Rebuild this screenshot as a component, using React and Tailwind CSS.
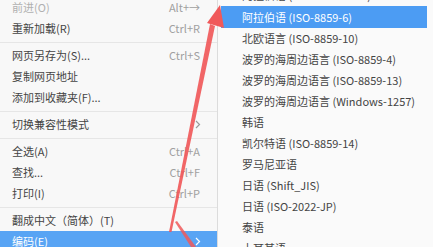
const MAIN = [
  { label: "前进(O)", key: "Alt+→", disabled: true },
  { label: "重新加载(R)", key: "Ctrl+R" },
  { sep: true },
  { label: "网页另存为(S)...", key: "Ctrl+S" },
  { label: "复制网页地址" },
  { label: "添加到收藏夹(F)..." },
  { sep: true },
  { label: "切换兼容性模式", sub: true },
  { sep: true },
  { label: "全选(A)", key: "Ctrl+A" },
  { label: "查找...", key: "Ctrl+F" },
  { label: "打印(I)", key: "Ctrl+P" },
  { sep: true },
  { label: "翻成中文（简体）(T)" },
  { label: "编码(E)", sub: true, active: true },
];

const ENCODINGS = [
  "阿拉伯语 (Windows-1256)",
  "阿拉伯语 (ISO-8859-6)",
  "北欧语言 (ISO-8859-10)",
  "波罗的海周边语言 (ISO-8859-4)",
  "波罗的海周边语言 (ISO-8859-13)",
  "波罗的海周边语言 (Windows-1257)",
  "韩语",
  "凯尔特语 (ISO-8859-14)",
  "罗马尼亚语",
  "日语 (Shift_JIS)",
  "日语 (ISO-2022-JP)",
  "泰语",
  "土耳其语",
];

const Chevron = ({ white }) => (
  <svg width="6" height="9" viewBox="0 0 6 9" fill="none">
    <path d="M1 1l3.5 3.5L1 8" stroke={white ? "#ffffff" : "#9a9a9a"} strokeWidth="1.2" />
  </svg>
);

function MainMenu() {
  return (
    <div className="w-[218px] shrink-0 h-full bg-[#f8f8f8] border-r border-[#dcdcdc] overflow-hidden">
      <div className="-mt-[3px]">
        {MAIN.map((item, i) =>
          item.sep ? (
            <div key={i} className="h-[6px] flex items-center">
              <div className="h-px w-full bg-[#e6e6e6]" />
            </div>
          ) : (
            <div
              key={i}
              className={`h-[21px] flex items-center justify-between pl-[12px] pr-[17px] ${
                item.active ? "bg-[#58a4f4] text-white" : item.disabled ? "text-[#b0b0b0]" : "text-[#444444]"
              }`}
            >
              <span>{item.label}</span>
              {item.key && <span className="text-[#a0a0a0]">{item.key}</span>}
              {item.sub && (
                <span className="mr-[-1px]">
                  <Chevron white={item.active} />
                </span>
              )}
            </div>
          )
        )}
      </div>
    </div>
  );
}

function SubMenu() {
  return (
    <div className="flex-1 h-full bg-[#fafafa] overflow-hidden pl-[3px] pr-[6px]">
      <div className="-mt-[15px]">
        {ENCODINGS.map((name, i) => (
          <div
            key={name}
            className={`flex items-center pl-[21px] ${
              i === 1 ? "h-[22px] bg-[#4c9cf3] text-white" : "h-[21px] text-[#444444]"
            }`}
          >
            {name}
          </div>
        ))}
      </div>
    </div>
  );
}

export default function App() {
  return (
    <div
      className="relative w-[433px] h-[247px] overflow-hidden flex bg-white text-[11px] leading-none"
      style={{ fontFamily: '"Noto Sans CJK SC", "Noto Sans", sans-serif' }}
    >
      <MainMenu />
      <SubMenu />
      <svg className="absolute inset-0 pointer-events-none" width="433" height="247" viewBox="0 0 433 247">
        <polygon points="169,232 171.5,232 215,26 210,24" fill="#f0595a" fillOpacity="0.92" />
        <polygon points="220,5 207,23 224,28" fill="#f0595a" />
        <polygon points="175,222 177,221 196,247 191,247" fill="#f0595a" fillOpacity="0.85" />
      </svg>
    </div>
  );
}
